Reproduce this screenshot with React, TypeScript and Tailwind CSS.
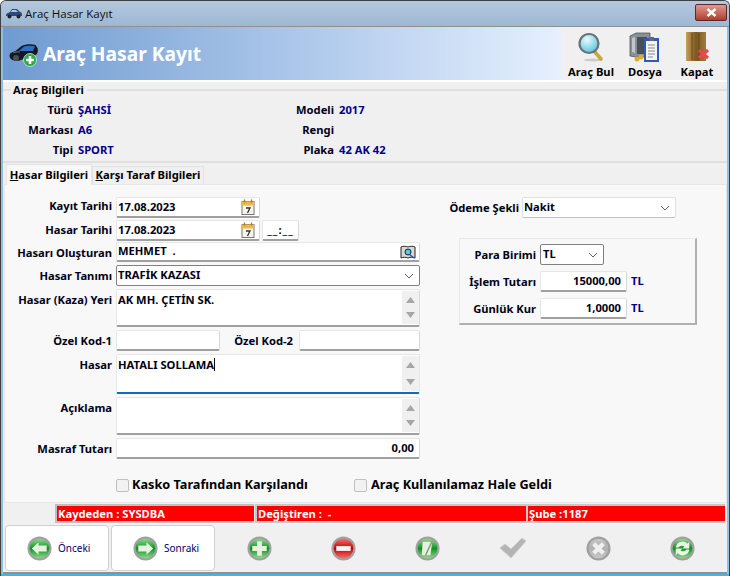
import React from "react";

const font = "font-['Noto_Sans','Liberation_Sans',sans-serif]";

const Label = ({ children, w = "w-[107px]", pt = "pt-[4px]" }: { children: React.ReactNode; w?: string; pt?: string }) => (
  <div className={`${w} ${pt} shrink-0 text-right font-bold text-[11.2px] leading-[14px] text-[#00001a] whitespace-nowrap`}>{children}</div>
);

const inputCls =
  "bg-white border border-[#e6e6e6] border-b-2 border-b-[#a0a0a0] border-r-[#d8d8d8] rounded-[2px] font-bold text-[11.2px] text-[#000014]";

const Chevron = () => (
  <svg width="10" height="6" viewBox="0 0 10 6" className="shrink-0">
    <path d="M1 1l4 4 4-4" fill="none" stroke="#606060" strokeWidth="1" />
  </svg>
);

const Calendar = () => (
  <svg width="14" height="16" viewBox="0 0 14 16" className="shrink-0">
    <rect x="1" y="2.5" width="12" height="13" fill="#f4f4ec" stroke="#777" />
    <rect x="1" y="2.5" width="12" height="4" fill="#f0b840" />
    <path d="M3.5 0.5v3M10.5 0.5v3" stroke="#b07820" strokeWidth="1.4" />
    <path d="M5 9h4L6.5 14" fill="none" stroke="#333" strokeWidth="1.3" />
  </svg>
);

const ScrollBtns = () => (
  <div className="w-[17px] self-stretch my-px bg-[#f0f0f0] flex flex-col justify-between items-center py-[6px] shrink-0">
    <svg width="9" height="6" viewBox="0 0 9 6"><path d="M4.5 0L9 6H0z" fill="#a6a6a6" /></svg>
    <svg width="9" height="6" viewBox="0 0 9 6"><path d="M4.5 6L9 0H0z" fill="#a6a6a6" /></svg>
  </div>
);

const Row = ({ children, cls }: { children: React.ReactNode; cls: string }) => (
  <div className={`flex items-start gap-[4px] ${cls}`}>{children}</div>
);

const Memo = ({ text, cls, caret }: { text?: string; cls: string; caret?: boolean }) => (
  <div className={`w-[304px] flex pl-[1px] ${cls}`}>
    <div className="flex-1 pt-[2px] leading-[15px]">
      {text}
      {caret && <span className="inline-block w-px h-[13px] bg-black align-[-2px]" />}
    </div>
    <ScrollBtns />
  </div>
);

const Circle = ({ id, c1, c2, children }: { id: string; c1: string; c2: string; children: React.ReactNode }) => (
  <svg width="25" height="25" viewBox="0 0 26 26" className="shrink-0">
    <defs>
      <linearGradient id={id} x1="0" y1="0" x2="0" y2="1">
        <stop offset="0" stopColor={c1} />
        <stop offset="0.5" stopColor={c2} />
        <stop offset="1" stopColor={c1} />
      </linearGradient>
    </defs>
    <circle cx="13" cy="13" r="12.5" fill="#a0a0a0" />
    <circle cx="13" cy="13" r="10.2" fill={`url(#${id})`} />
    {children}
  </svg>
);

const NavBtn = ({ label, children }: { label: string; children: React.ReactNode }) => (
  <div className="w-[104px] h-[46px] bg-white border border-[#d0d0d0] rounded-[4px] flex items-center pl-[21px] gap-[6px] mr-[2px]">
    {children}
    <span className="text-[10px] text-[#00006a]">{label}</span>
  </div>
);

const TopTool = ({ label, children, w }: { label: string; children: React.ReactNode; w: string }) => (
  <div className={`${w} flex flex-col items-center`}>
    <div className="h-[32px] flex items-center">{children}</div>
    <span className="font-bold text-[11.2px] leading-[14px] text-black mt-[2px] whitespace-nowrap">{label}</span>
  </div>
);

const Info = ({ label, value, w }: { label: string; value?: string; w: string }) => (
  <div className="flex gap-[5px] h-[20px] items-center">
    <div className={`${w} text-right font-bold text-[11.2px] text-[#00001a]`}>{label}</div>
    <div className="font-bold text-[11.2px] text-[#00008b]">{value}</div>
  </div>
);

export default function App() {
  return (
    <div className={`${font} w-[730px] h-[576px] overflow-hidden flex flex-col bg-[#8fc0e4] border border-[#404040] border-b-0 rounded-t-[6px]`}>
      {/* title bar */}
      <div className="h-[26px] shrink-0 flex items-center pl-[4px] pr-[1px] bg-gradient-to-b from-[#b4c8dd] to-[#9db8d3] border-b border-[#909090]">
        <svg width="18" height="11" viewBox="0 0 18 11">
          <path d="M1 8c0-3 2-3 4-4l2-3h5l3 3c2 0 2 2 2 4z" fill="#2f4a7a" />
          <path d="M7 2h4l2 2H6z" fill="#a8c8e8" />
          <circle cx="4.5" cy="8.5" r="2" fill="#222" />
          <circle cx="13.5" cy="8.5" r="2" fill="#222" />
        </svg>
        <span className="ml-[2px] text-[11.5px] text-[#101010] font-['Open_Sans','Liberation_Sans',sans-serif]">Araç Hasar Kayıt</span>
        <div className="ml-auto mb-[2px] mr-[1px] w-[32px] h-[17px] rounded-[2px] border border-[#5a2a2a] bg-gradient-to-b from-[#dc9a90] to-[#b23a30] flex items-center justify-center">
          <svg width="11" height="9" viewBox="0 0 11 9"><path d="M1.5 1l8 7M9.5 1l-8 7" stroke="#fff" strokeWidth="2.4" /></svg>
        </div>
      </div>

      <div className="flex-1 mx-[2px] flex flex-col bg-[#f0f0f0] min-h-0">
        {/* header */}
        <div className="h-[53px] shrink-0 flex border-b-[2px] border-white box-content">
          <div className="w-[558px] bg-gradient-to-r from-[#6f9bd0] via-[#a9c5e9] to-[#e6f0fe] flex items-center pl-[6px]">
            <svg width="31" height="24" viewBox="0 0 31 24" className="mt-[3px]">
              <path d="M0.5 13c0-3 3-4 6-5l6-5c4-2 10-2 14-1l2 3c1 3 0 6-2 7L9 18c-4 0-8-1-8.500-5z" fill="#15191f" />
              <path d="M10 8l5-4.500c3-1 8-1 11 0l-2 4.500z" fill="#2f6fc8" />
              <path d="M4 9.500l7-1" stroke="#4a5a70" strokeWidth="1.5" />
              <circle cx="7" cy="15" r="3" fill="#4a4f55" />
              <circle cx="21" cy="17" r="6.500" fill="#2ca84a" stroke="#d8e8d8" strokeWidth="0.8" />
              <path d="M21 13v8M17 17h8" stroke="#fff" strokeWidth="2.600" />
            </svg>
            <span className="ml-[3px] font-bold text-white text-[19.2px] leading-none mt-[1px]">Araç Hasar Kayıt</span>
          </div>
          <div className="flex-1 flex items-start pt-[4px] pl-[2px]">
            <TopTool label="Araç Bul" w="w-[56px]">
              <svg width="28" height="30" viewBox="0 0 28 30">
                <defs>
                  <radialGradient id="lens" cx="0.4" cy="0.3" r="0.8">
                    <stop offset="0" stopColor="#e8fbff" />
                    <stop offset="1" stopColor="#48bcd8" />
                  </radialGradient>
                </defs>
                <ellipse cx="16" cy="28" rx="9" ry="1.5" fill="#cccccc" />
                <path d="M17 19l7 8" stroke="#c8a838" strokeWidth="3.600" strokeLinecap="round" />
                <circle cx="12" cy="11.500" r="9.500" fill="url(#lens)" stroke="#6a7278" strokeWidth="2.200" />
              </svg>
            </TopTool>
            <TopTool label="Dosya" w="w-[52px]">
              <svg width="32" height="32" viewBox="0 0 32 32">
                <path d="M1 5l6-3h14v24H7l-6-1z" fill="#8a9098" stroke="#555" strokeWidth="0.8" />
                <rect x="8" y="6" width="10" height="17" fill="#4a5058" />
                <path d="M3 7l3-1v16l-3-1z" fill="#c0c6cc" />
                <circle cx="12" cy="26" r="2.500" fill="#d8b030" />
                <circle cx="8" cy="28" r="2.500" fill="#d8b030" />
                <rect x="15" y="7" width="15" height="24" fill="#2a5cc0" />
                <rect x="17" y="10" width="11" height="19" fill="#f4f4f4" />
                <rect x="20" y="6" width="5" height="4" fill="#5a6a80" />
                <path d="M19 14h7M19 17h7M19 20h7M19 23h7M19 26h5" stroke="#8a8a8a" />
              </svg>
            </TopTool>
            <TopTool label="Kapat" w="w-[52px]">
              <svg width="26" height="32" viewBox="0 0 26 32">
                <defs>
                  <linearGradient id="door" x1="0" y1="0" x2="1" y2="0">
                    <stop offset="0" stopColor="#c8a060" />
                    <stop offset="0.5" stopColor="#7a5820" />
                    <stop offset="1" stopColor="#a07c3c" />
                  </linearGradient>
                </defs>
                <rect x="2" y="1" width="20" height="29" fill="url(#door)" />
                <path d="M8 2v27M15 2v27" stroke="#5c4014" strokeWidth="0.8" />
                <path d="M15 19l9 8M24 19l-9 8" stroke="#ec4650" strokeWidth="3.200" />
              </svg>
            </TopTool>
          </div>
        </div>

        {/* group */}
        <div className="h-[81px] shrink-0 border-b-2 border-[#e0e0e0]">
          <div className="flex items-center h-[14px] mt-px">
            <div className="w-[8px] h-[2px] bg-[#e0e0e0]" />
            <span className="px-[2px] font-bold text-[11.2px] text-black">Araç Bilgileri</span>
            <div className="flex-1 h-[2px] bg-[#e0e0e0] ml-[1px]" />
          </div>
          <div className="flex pt-[3px]">
            <div className="w-[290px]">
              <Info label="Türü" value="ŞAHSİ" w="w-[70px]" />
              <Info label="Markası" value="A6" w="w-[70px]" />
              <Info label="Tipi" value="SPORT" w="w-[70px]" />
            </div>
            <div>
              <Info label="Modeli" value="2017" w="w-[41px]" />
              <Info label="Rengi" w="w-[41px]" />
              <Info label="Plaka" value="42 AK 42" w="w-[41px]" />
            </div>
          </div>
        </div>

        {/* tabs */}
        <div className="h-[21px] shrink-0 flex items-end pl-[3px]">
          <div className="h-[21px] w-[86px] bg-[#f8f8f8] border border-b-0 border-[#e4e4e4] flex items-center justify-center font-bold text-[11.2px] text-black z-10 -mb-px">
            <span><u>H</u>asar Bilgileri</span>
          </div>
          <div className="h-[18px] w-[112px] border border-b-0 border-[#e4e4e4] flex items-center justify-center font-bold text-[11.2px] text-black">
            <span><u>K</u>arşı Taraf Bilgileri</span>
          </div>
        </div>

        {/* panel */}
        <div className="h-[319px] shrink-0 bg-[#f8f8f8] border border-[#e8e8e8] ml-px flex flex-col">
          <div className="flex h-[285px] shrink-0">
            <div className="w-[443px] shrink-0 pt-[12px]">
              <Row cls="h-[20px] mb-[3px]">
                <Label pt="pt-[2px]">Kayıt Tarihi</Label>
                <div className={`${inputCls} w-[144px] h-[21px] flex items-center justify-between pl-[1px] pr-[4px]`}>17.08.2023<Calendar /></div>
              </Row>
              <Row cls="h-[20px] mb-[2px]">
                <Label pt="pt-[3px]">Hasar Tarihi</Label>
                <div className={`${inputCls} w-[144px] h-[21px] flex items-center justify-between pl-[1px] pr-[4px]`}>17.08.2023<Calendar /></div>
                <div className={`${inputCls} w-[37px] h-[21px] -ml-[2px] flex items-center justify-center tracking-[1px]`}>__:__</div>
              </Row>
              <Row cls="h-[20px] mb-[3px]">
                <Label>Hasarı Oluşturan</Label>
                <div className={`${inputCls} w-[304px] h-[20px] flex items-center justify-between pl-[1px] pr-[3px]`}>
                  MEHMET &nbsp;.
                  <svg width="16" height="14" viewBox="0 0 16 14">
                    <path d="M1 2c2-1 5-1 7 0 2-1 5-1 7 0v11c-2-1-5-1-7 0-2-1-5-1-7 0z" fill="#d8d8d8" stroke="#222" />
                    <circle cx="8" cy="7" r="3" fill="#50c8f0" stroke="#222" />
                    <path d="M10 10l4 3" stroke="#2050d0" strokeWidth="1.500" />
                  </svg>
                </div>
              </Row>
              <Row cls="h-[21px] mb-[3px]">
                <Label>Hasar Tanımı</Label>
                <div className="w-[304px] h-[21px] bg-white border border-[#808080] rounded-[2px] font-bold text-[11.2px] text-[#000014] flex items-center justify-between pl-[1px] pr-[5px]">
                  TRAFİK KAZASI<Chevron />
                </div>
              </Row>
              <Row cls="h-[38px] mb-[3px]">
                <Label>Hasar (Kaza) Yeri</Label>
                <Memo text="AK MH. ÇETİN SK." cls={`${inputCls} h-[38px]`} />
              </Row>
              <Row cls="h-[21px] mb-[3px]">
                <Label>Özel Kod-1</Label>
                <div className={`${inputCls} w-[104px] h-[21px]`} />
                <Label w="w-[69px] mr-[2px]">Özel Kod-2</Label>
                <div className={`${inputCls} w-[121px] h-[21px]`} />
              </Row>
              <Row cls="h-[40px] mb-[3px]">
                <Label>Hasar</Label>
                <Memo text="HATALI SOLLAMA" caret cls="bg-white border border-[#e6e6e6] border-b-2 border-b-[#0f6cbd] rounded-[2px] font-bold text-[11.2px] text-[#000014] h-[40px]" />
              </Row>
              <Row cls="h-[38px] mb-[3px]">
                <Label>Açıklama</Label>
                <Memo cls={`${inputCls} h-[38px]`} />
              </Row>
              <Row cls="h-[21px]">
                <Label>Masraf Tutarı</Label>
                <div className={`${inputCls} w-[304px] h-[21px] flex items-center justify-end pr-[5px]`}>0,00</div>
              </Row>
            </div>

            <div className="pt-[12px] flex-1">
              <div className="flex items-center gap-[3px] h-[21px]">
                <Label w="w-[71px]" pt="pt-[1px]">Ödeme Şekli</Label>
                <div className="w-[154px] h-[21px] bg-white border border-[#e0e0e0] border-b-[#c0c0c0] rounded-[2px] font-bold text-[11.2px] text-[#000014] flex items-center justify-between pl-[1px] pr-[5px]">
                  Nakit<Chevron />
                </div>
              </div>
              <div className="mt-[20px] ml-[11px] w-[238px] h-[87px] bg-[#f8f8f8] border border-[#e8e8e8] border-b-2 border-r-2 border-b-[#b0b0b0] border-r-[#b0b0b0] pt-[5px]">
                <div className="flex items-center gap-[4px] h-[21px]">
                  <Label w="w-[76px]" pt="pt-[1px]">Para Birimi</Label>
                  <div className="w-[64px] h-[21px] bg-white border border-[#808080] rounded-[2px] font-bold text-[11.2px] text-[#000014] flex items-center justify-between pl-[2px] pr-[5px]">
                    TL<Chevron />
                  </div>
                </div>
                <div className="flex items-center gap-[4px] h-[21px] mt-[6px]">
                  <Label w="w-[76px]" pt="pt-[1px]">İşlem Tutarı</Label>
                  <div className={`${inputCls} w-[87px] h-[21px] flex items-center justify-end pr-[5px]`}>15000,00</div>
                  <span className="font-bold text-[11.2px] text-[#00008b]">TL</span>
                </div>
                <div className="flex items-center gap-[4px] h-[21px] mt-[6px]">
                  <Label w="w-[76px]" pt="pt-[1px]">Günlük Kur</Label>
                  <div className={`${inputCls} w-[87px] h-[21px] flex items-center justify-end pr-[5px]`}>1,0000</div>
                  <span className="font-bold text-[11.2px] text-[#00008b]">TL</span>
                </div>
              </div>
            </div>
          </div>
          <div className="flex items-center h-[16px] mt-[7px] pl-[111px]">
            <div className="w-[13px] h-[13px] shrink-0 bg-[#f2f2f2] border border-[#c0c0c0] rounded-[2px]" />
            <span className="ml-[3px] w-[222px] font-bold text-[12.7px] text-black whitespace-nowrap">Kasko Tarafından Karşılandı</span>
            <div className="w-[13px] h-[13px] shrink-0 bg-[#f2f2f2] border border-[#c0c0c0] rounded-[2px]" />
            <span className="ml-[4px] font-bold text-[12.7px] text-black whitespace-nowrap">Araç Kullanılamaz Hale Geldi</span>
          </div>
        </div>

        {/* status */}
        <div className="h-[19px] shrink-0 flex pl-[52px] mt-px text-white font-bold text-[11.2px] leading-[15px]">
          <div className="w-[199px] bg-[#ff0000] pl-px border-2 border-r-0 border-[#c0c0c0] whitespace-nowrap">Kaydeden : SYSDBA</div>
          <div className="w-[271px] bg-[#ff0000] pl-px ml-[1px] border-2 border-r-0 border-[#c8c8c8] whitespace-pre">Değiştiren :  -</div>
          <div className="flex-1 bg-[#ff0000] pl-px border-2 border-r-0 border-[#c8c8c8] mr-[2px] whitespace-nowrap">Şube :1187</div>
        </div>

        {/* bottom toolbar */}
        <div className="flex-1 flex items-center pl-[2px] min-h-0 pt-[1px] border-b-2 border-[#909090]">
          <NavBtn label="Önceki">
            <Circle id="prev" c1="#8fd890" c2="#0c9420">
              <path d="M5 13l7-6.500v3.500h8.500v6H12v3.500z" fill="#e8f0e0" />
            </Circle>
          </NavBtn>
          <NavBtn label="Sonraki">
            <Circle id="next" c1="#8fd890" c2="#0c9420">
              <path d="M21 13l-7-6.500v3.500H5.500v6H14v3.500z" fill="#e8f0e0" />
            </Circle>
          </NavBtn>
          <div className="flex-1 flex items-center justify-between pl-[30px] pr-[32px]">
            <Circle id="add" c1="#8fd890" c2="#0c9420">
              <path d="M13 5.500v15M5.500 13h15" stroke="#e8f0e0" strokeWidth="5" />
            </Circle>
            <Circle id="del" c1="#f07070" c2="#c80000">
              <path d="M5.500 13h15" stroke="#f4f4f4" strokeWidth="5" />
            </Circle>
            <Circle id="edit" c1="#8fd890" c2="#0c9420">
              <path d="M8 6h10l-2 14H7z" fill="#e8f0e0" />
              <path d="M18 5l-7 15" stroke="#7a9a7a" strokeWidth="1.500" />
            </Circle>
            <svg width="28" height="24" viewBox="0 0 28 24">
              <path d="M1 12l5-4 6 5L23 2l4 3-15 17z" fill="#b4b4b4" stroke="#cccccc" />
            </svg>
            <Circle id="cancel" c1="#c8c8c8" c2="#b0b0b0">
              <path d="M8 8l10 10M18 8L8 18" stroke="#f0f0f0" strokeWidth="4.400" />
            </Circle>
            <Circle id="refresh" c1="#8fd890" c2="#0c9420">
              <path d="M6 12a7 7 0 0 1 12-4l2-2v7h-7l2-2a4 4 0 0 0-6 1zM20 14a7 7 0 0 1-12 4l-2 2v-7h7l-2 2a4 4 0 0 0 6-1z" fill="#f0f4e8" />
            </Circle>
          </div>
        </div>
      </div>
      <div className="h-[2px] shrink-0 bg-[#3fb8e0]" />
    </div>
  );
}
